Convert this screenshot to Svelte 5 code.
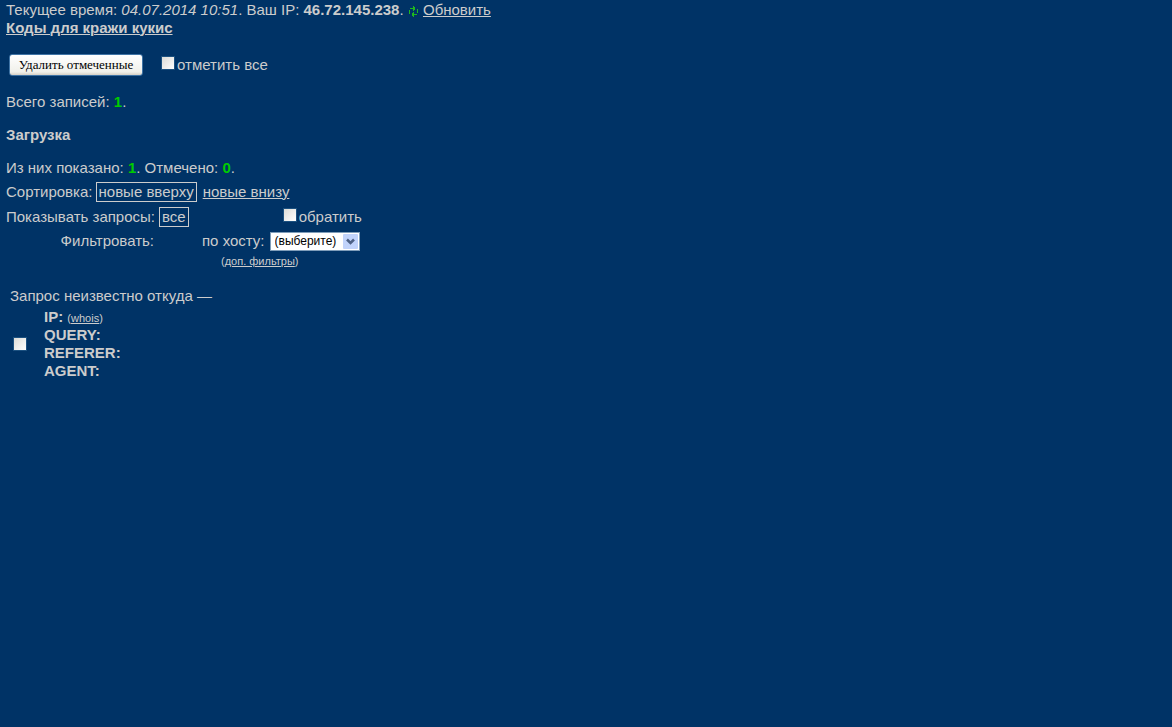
<script>
  const total = 1;
  const shown = 1;
  const fields = ['QUERY:', 'REFERER:', 'AGENT:'];
  let marked = $state(false);
  let invert = $state(false);
</script>

<main>
  <div>
    Текущее время: <em>04.07.2014 10:51</em>. Ваш IP: <b>46.72.145.238</b>.
    <svg class="refresh" viewBox="0 0 11 11" width="11" height="11" aria-hidden="true">
      <path d="M1.500 8V4M2 2.500h5M5.500 0v5M6.500 1v3M9.500 3v4M9 8.500H4M5.500 6v5M4.500 7v3" />
    </svg>
    <a href="#refresh">Обновить</a>
  </div>
  <div><a href="#codes"><b>Коды для кражи кукис</b></a></div>

  <div class="actions">
    <button type="button">Удалить отмеченные</button>
    <label class="check"><input type="checkbox" bind:checked={marked} />отметить все</label>
  </div>

  <p>Всего записей: <b class="num">{total}</b>.</p>
  <h1>Загрузка</h1>
  <p class="shown">Из них показано: <b class="num">{shown}</b>. Отмечено: <b class="num">{marked ? 1 : 0}</b>.</p>

  <div class="row sort">
    <span>Сортировка:</span>
    <span class="current">новые вверху</span>
    <a class="other" href="#bottom">новые внизу</a>
  </div>
  <div class="row">
    <span class="name">Показывать запросы:</span>
    <span class="current">все</span>
    <label class="check invert"><input type="checkbox" bind:checked={invert} />обратить</label>
  </div>
  <div class="row filter">
    <span class="name">Фильтровать:</span>
    <label class="host" for="host">по хосту:</label>
    <span class="select">
      <select id="host"><option>(выберите)</option></select>
      <svg viewBox="0 0 15 15" width="15" height="15" aria-hidden="true">
        <rect width="15" height="15" rx="1" />
        <path d="M4 5.500l3.500 3.500L11 5.500" />
      </svg>
    </span>
  </div>
  <div class="more">(<a href="#filters">доп. фильтры</a>)</div>

  <section>
    <div>Запрос неизвестно откуда —</div>
    <div class="record">
      <input type="checkbox" aria-label="Отметить запись" bind:checked={marked} />
      <div>
        <div><b>IP:</b> <small>(<a href="#whois">whois</a>)</small></div>
        {#each fields as field}
          <div><b>{field}</b></div>
        {/each}
      </div>
    </div>
  </section>
</main>

<style>
  :global(body) {
    background: #003366;
  }
  main {
    padding: 1px 6px;
    color: #ccc;
    font: 15px/18px "Liberation Sans", Arial, sans-serif;
  }
  a {
    color: inherit;
    text-underline-offset: 1px;
    text-decoration-thickness: 1px;
  }
  .refresh {
    vertical-align: -2px;
    fill: none;
    stroke: #1fb71f;
  }
  .actions {
    display: flex;
    align-items: center;
    gap: 18px;
    margin: 17px 3px;
  }
  button {
    height: 22px;
    width: 134px;
    padding: 0;
    border: 1px solid #3f74a6;
    border-radius: 3px;
    background: linear-gradient(#fff, #f0f0ea 85%, #d6d0c5);
    color: #000;
    font: 13px/18px "Liberation Serif", "Times New Roman", serif;
    white-space: nowrap;
  }
  input {
    appearance: none;
    width: 14px;
    height: 14px;
    margin: 0;
    border: 1px solid #1c5180;
    background: linear-gradient(135deg, #dcdcd7, #fff) padding-box;
  }
  input:checked {
    background: #21a121;
  }
  .check {
    display: flex;
    gap: 2px;
  }
  p,
  h1 {
    margin: 0 0 15px;
    font-size: 15px;
  }
  .num {
    color: #00cc00;
  }
  .shown {
    margin-bottom: 5px;
  }
  .row {
    display: flex;
    align-items: center;
    gap: 5px;
    height: 20px;
    margin-bottom: 4px;
  }
  .sort {
    gap: 3px;
    margin-bottom: 5px;
  }
  .name {
    width: 148px;
    text-align: right;
    white-space: nowrap;
  }
  .current {
    padding: 0 2px;
    border: 1px solid #ccc;
  }
  .other {
    margin-left: 3px;
  }
  .invert {
    margin-left: 89px;
  }
  .host {
    margin-left: 43px;
  }
  .filter {
    margin-bottom: 1px;
  }
  .select {
    display: grid;
    width: 90px;
  }
  .select > * {
    grid-area: 1 / 1;
  }
  select {
    appearance: none;
    width: 100%;
    height: 19px;
    padding: 0 4px;
    border: 1px solid #7f9db9;
    border-radius: 0;
    background: #fff;
    color: #000;
    font: 12px/16px "Liberation Sans", Arial, sans-serif;
  }
  .select svg {
    place-self: center end;
    margin-right: 2px;
    pointer-events: none;
    fill: #c1d3fb;
  }
  .select path {
    fill: none;
    stroke: #4d6185;
    stroke-width: 2.5;
  }
  .more {
    padding-left: 215px;
    font-size: 11px;
  }
  small {
    font-size: 11px;
    line-height: 11px;
  }
  section {
    margin: 17px 4px;
  }
  .record {
    display: flex;
    align-items: center;
    gap: 17px;
    margin: 3px;
  }
</style>
